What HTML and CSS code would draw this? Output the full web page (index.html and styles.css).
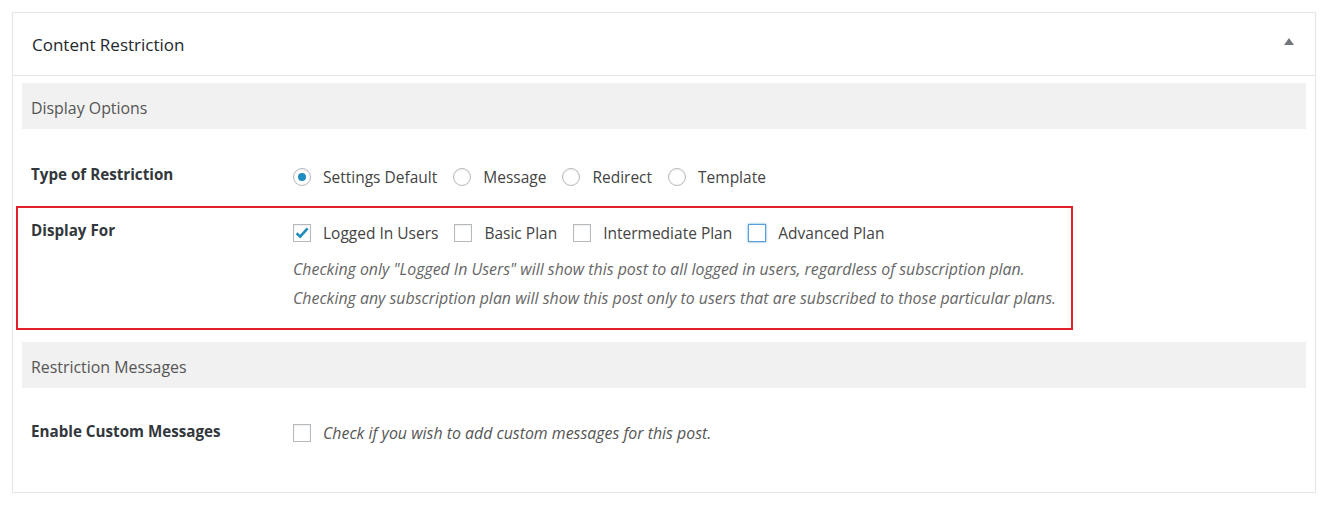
FILE: index.html
```html
<!DOCTYPE html>
<html>
<head>
    <meta charset="utf-8">
    <meta name="viewport" content="width=device-width, initial-scale=1">
    <title>Content Restriction</title>
    <link rel="stylesheet" href="styles.css">
</head>
<body>
    <div class="postbox">
        <div class="postbox-header">
            <h2>Content Restriction</h2>
            <span class="toggle-arrow"></span>
        </div>
        <div class="inside">
            <div class="section-title">Display Options</div>

            <div class="field-row row-type">
                <div class="field-label">Type of Restriction</div>
                <div class="field-input">
                    <label class="option"><span class="radio checked"></span>Settings Default</label>
                    <label class="option"><span class="radio"></span>Message</label>
                    <label class="option"><span class="radio"></span>Redirect</label>
                    <label class="option"><span class="radio"></span>Template</label>
                </div>
            </div>

            <div class="field-row row-display highlight">
                <div class="field-label">Display For</div>
                <div class="field-input stacked">
                    <div class="options">
                        <label class="option"><span class="checkbox checked"><svg viewBox="0 0 18 18" width="18" height="18"><path d="M3.6 9.2 L7.2 12.6 L14.6 4.4" fill="none" stroke="#1e8cbe" stroke-width="2.6"/></svg></span>Logged In Users</label>
                        <label class="option"><span class="checkbox"></span>Basic Plan</label>
                        <label class="option"><span class="checkbox"></span>Intermediate Plan</label>
                        <label class="option"><span class="checkbox focused"></span>Advanced Plan</label>
                    </div>
                    <p class="description">Checking only "Logged In Users" will show this post to all logged in users, regardless of subscription plan.</p>
                    <p class="description">Checking any subscription plan will show this post only to users that are subscribed to those particular plans.</p>
                </div>
            </div>

            <div class="section-title">Restriction Messages</div>

            <div class="field-row row-messages">
                <div class="field-label">Enable Custom Messages</div>
                <div class="field-input">
                    <label class="option"><span class="checkbox"></span><em class="hint">Check if you wish to add custom messages for this post.</em></label>
                </div>
            </div>
        </div>
    </div>
</body>
</html>
```

FILE: styles.css
```css
body { margin: 0; padding: 12px 12px 0 12px; background: #fff; font-family: "Open Sans", "Noto Sans", sans-serif; color: #444; }
.postbox { border: 1px solid #e5e5e5; background: #fff; box-shadow: 0 1px 1px rgba(0,0,0,0.06); }
.postbox-header { display: flex; align-items: center; justify-content: space-between; height: 62px; padding: 0 21px 0 19px; border-bottom: 1px solid #e5e5e5; }
.postbox-header h2 { margin: 0; font-size: 17px; font-weight: 400; color: #23282d; }
.toggle-arrow { width: 0; height: 0; border-left: 5px solid transparent; border-right: 5px solid transparent; border-bottom: 7px solid #72777c; margin-top: -5px; }
.inside { padding: 7px 9px 0 9px; }
.section-title { background: #f1f1f1; height: 20px; line-height: 20px; padding: 15px 9px 11px; font-size: 15.9px; font-weight: 400; color: #555; }
.field-row { display: flex; align-items: flex-start; padding: 0 9px; }
.field-label { width: 262px; flex-shrink: 0; font-size: 15.2px; font-weight: 700; color: #32373c; line-height: 20px; }
.field-input { display: flex; align-items: center; font-size: 15.5px; color: #444; }
.field-input.stacked { flex-direction: column; align-items: flex-start; }
.options { display: flex; align-items: center; }
.option { display: flex; align-items: center; margin-right: 16px; line-height: 20px; }
.radio, .checkbox { width: 16px; height: 16px; border: 1px solid #b4b9be; background: #fff; box-shadow: inset 0 1px 2px rgba(0,0,0,0.07); margin-right: 12px; flex-shrink: 0; position: relative; }
.radio { border-radius: 50%; }
.radio.checked::after { content: ""; position: absolute; left: 4px; top: 4px; width: 8px; height: 8px; border-radius: 50%; background: #1e8cbe; }
.checkbox svg { position: absolute; left: -1px; top: -1px; }
.checkbox.focused { border-color: #5b9dd9; box-shadow: 0 0 2px rgba(30,140,190,0.8); }
.row-type { padding-top: 35px; padding-bottom: 19px; }
.row-type .field-input { padding-top: 3px; }
.highlight { border: 2px solid #e3202a; margin: 0 233px 0 -6px; padding: 12px 9px 15px 13px; }
.row-display .field-input { padding-top: 3px; }
.description { margin: 0; font-style: italic; font-size: 15.9px; color: #666; line-height: 29px; }
.options + .description { margin-top: 12px; }
.row-display + .section-title { margin-top: 12px; }
.row-messages { padding-top: 33px; padding-bottom: 49px; }
.row-messages .field-input { padding-top: 2px; }
.hint { font-size: 15.9px; color: #555; }
```
